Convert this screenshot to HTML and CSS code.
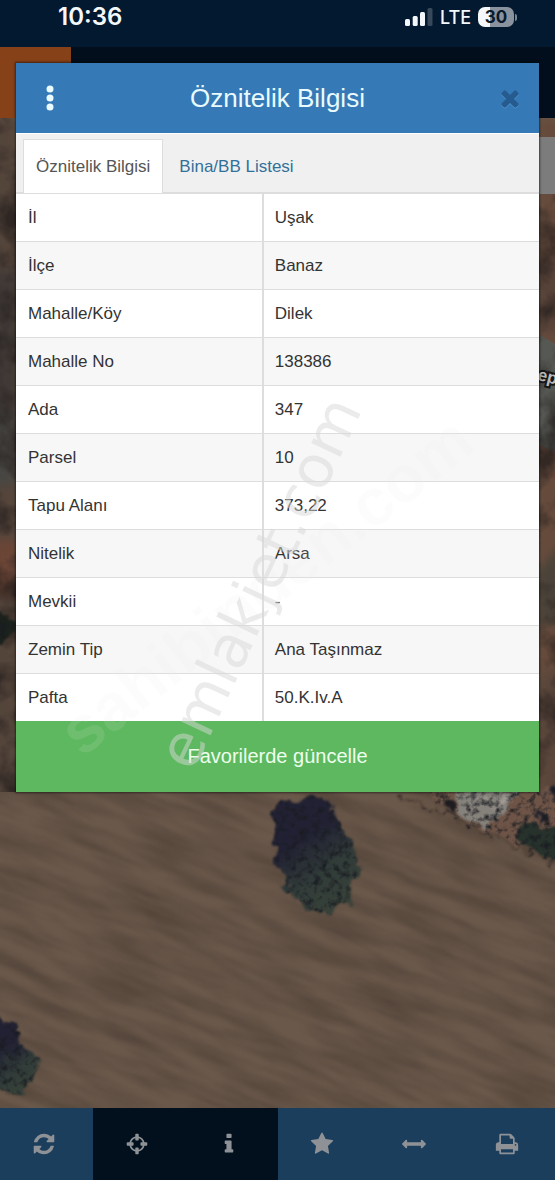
FILE: index.html
```html
<!DOCTYPE html>
<html lang="tr">
<head>
<meta charset="utf-8">
<meta name="viewport" content="width=device-width, initial-scale=1">
<title>Öznitelik Bilgisi</title>
<link rel="stylesheet" href="styles.css">
</head>
<body>
<div class="screen">
  <header class="status">
    <time class="clock">10:36</time>
    <div class="status-right">
      <svg class="signal" viewBox="0 0 28 18" aria-hidden="true">
        <g fill="#f4f8fb"><rect x="0" y="11" width="5" height="7" rx="1.5"/><rect x="7.700" y="8" width="5" height="10" rx="1.500"/><rect x="15" y="4" width="5" height="14" rx="1.5"/></g>
        <rect x="22.500" y="0" width="5" height="18" rx="1.5" fill="#37485a"/>
      </svg>
      <span class="network">LTE</span>
      <span class="battery">30</span>
    </div>
  </header>

  <main class="stage">
    <div class="backdrop" aria-hidden="true">
      <div class="appbar"><span class="appbar-logo"></span></div>
      <svg class="map" viewBox="0 118 555 990" preserveAspectRatio="xMidYMin slice">
        <defs>
          <filter id="furrows" x="0" y="0" width="100%" height="100%" color-interpolation-filters="sRGB">
            <feTurbulence type="fractalNoise" baseFrequency="0.012 0.07" numOctaves="4" seed="8"/>
            <feColorMatrix values="0 0 0 0 .25  0 0 0 0 .2  0 0 0 0 .17  .9 0 0 0 -.28"/>
            <feGaussianBlur stdDeviation="0.8"/>
          </filter>
          <filter id="patches" x="0" y="0" width="100%" height="100%" color-interpolation-filters="sRGB">
            <feTurbulence type="fractalNoise" baseFrequency="0.03" numOctaves="4" seed="3"/>
            <feColorMatrix values="0 0 0 0 .12  0 0 0 0 .1  0 0 0 0 .1  2.4 0 0 0 -.95"/>
          </filter>
          <filter id="soft" x="-100%" y="-10%" width="300%" height="120%" color-interpolation-filters="sRGB">
            <feGaussianBlur stdDeviation="5"/>
          </filter>
          <filter id="rough" x="-20%" y="-20%" width="140%" height="140%" color-interpolation-filters="sRGB">
            <feTurbulence type="fractalNoise" baseFrequency="0.09" numOctaves="2" seed="5" result="n"/>
            <feDisplacementMap in="SourceGraphic" in2="n" scale="18" xChannelSelector="R" yChannelSelector="G"/>
            <feGaussianBlur stdDeviation="1" result="shape"/>
            <feTurbulence type="fractalNoise" baseFrequency="0.14" numOctaves="3" seed="11"/>
            <feColorMatrix values="0 0 0 0 .1  0 0 0 0 .11  0 0 0 0 .13  2.4 0 0 0 -1.1"/>
            <feComposite in2="shape" operator="in" result="shade"/>
            <feMerge><feMergeNode in="shape"/><feMergeNode in="shade"/></feMerge>
          </filter>
          <linearGradient id="tree" x1="0.2" y1="0" x2="0.7" y2="1">
            <stop offset=".35" stop-color="#212133"/><stop offset=".65" stop-color="#303a38"/><stop offset="1" stop-color="#39433a"/>
          </linearGradient>
        </defs>
        <rect y="118" width="555" height="990" fill="#6a584a"/>
        <rect x="-300" y="300" width="1200" height="1200" filter="url(#furrows)" transform="rotate(22 277 800)"/>
        <g filter="url(#soft)">
          <rect x="-10" y="118" width="27" height="674" fill="#54453b"/>
          <rect x="-10" y="270" width="27" height="140" fill="#403936"/>
          <rect x="-10" y="410" width="27" height="75" fill="#484642"/>
          <rect x="-10" y="540" width="27" height="55" fill="#6b4536"/>
          <rect x="538" y="118" width="27" height="674" fill="#664b3c"/>
          <path d="M538 260h27v72h-27z" fill="#574238"/>
          <path d="M538 570l27-30v85h-27z" fill="#4b4339"/>
          <path d="M538 680l27-20v132h-27z" fill="#5a463b"/>
        </g>
        <path d="M538 334l17 10v108l-17-8z" fill="#565853"/>
        <rect y="118" width="17" height="674" filter="url(#patches)" opacity=".7"/>
        <rect x="538" y="194" width="17" height="598" filter="url(#patches)" opacity=".7"/>
        <g filter="url(#rough)">
          <path d="M420 790h150v74l-65-24-50-24z" fill="#6e5447"/>
          <path d="M454 790h62l-8 20-22 16-26-12z" fill="#85817b"/>
          <path d="M395 796l45 16 60 28 65 26" fill="none" stroke="#56453a" stroke-width="3"/>
          <path d="M470 795l36 14M492 792l24 12" stroke="#a39d95" stroke-width="2"/>
          <path d="M447 799l7 2 2 10-7 3-5-8z" fill="#201d20"/>
          <path d="M520 824l12-2 12 10 22-6v40l-32-14-14-8z" fill="#27322c"/>
          <path d="M534 814l8-2 5 6-7 6zM550 785l16-2v18l-18-4z" fill="#20202a"/>
          <path d="M-8 612q22-2 22 14t-22 22z" fill="#1b211c"/>
          <path d="M276 806l8-6 12 3 12-8 14 1 9 10 7 15 7 13 8 14 8 19-3 12-8 8-2 15-11 10-12 2-20-5-8-13-14-8 1-14-9-8 1-13-4-19 1-20z" fill="url(#tree)"/>
          <path d="M-10 1018l18 2 10 8 3 17 12 6 6 14-6 17-10 10-9 3-24-9z" fill="url(#tree)"/>
        </g>
        <rect x="538" y="137" width="17" height="57" fill="#7c7c7d"/>
        <text class="map-label" x="537" y="380" transform="rotate(14 538 379)">ep</text>
      </svg>
    </div>

    <section class="dialog" aria-labelledby="dialog-title">
      <div class="dialog-head">
        <button class="head-btn" type="button" aria-label="Menü">
          <svg width="8" height="26" viewBox="0 0 8 26" fill="#e9fbff"><circle cx="4" cy="4" r="3.500"/><circle cx="4" cy="13" r="3.500"/><circle cx="4" cy="22" r="3.500"/></svg>
        </button>
        <h1 class="dialog-title" id="dialog-title">Öznitelik Bilgisi</h1>
        <button class="head-btn close" type="button" aria-label="Kapat">
          <svg width="26" height="26" viewBox="0 0 1792 1792"><path d="M1490 1322q0 40-28 68l-136 136q-28 28-68 28t-68-28l-294-294-294 294q-28 28-68 28t-68-28l-136-136q-28-28-28-68t28-68l294-294-294-294q-28-28-28-68t28-68l136-136q28-28 68-28t68 28l294 294 294-294q28-28 68-28t68 28l136 136q28 28 28 68t-28 68l-294 294 294 294q28 28 28 68z"/></svg>
        </button>
      </div>
      <nav class="tabs">
        <a class="tab active" href="#bilgi" aria-current="page">Öznitelik Bilgisi</a>
        <a class="tab" href="#liste">Bina/BB Listesi</a>
      </nav>
      <table class="info">
        <tbody>
          <tr><th scope="row">İl</th><td>Uşak</td></tr>
          <tr><th scope="row">İlçe</th><td>Banaz</td></tr>
          <tr><th scope="row">Mahalle/Köy</th><td>Dilek</td></tr>
          <tr><th scope="row">Mahalle No</th><td>138386</td></tr>
          <tr><th scope="row">Ada</th><td>347</td></tr>
          <tr><th scope="row">Parsel</th><td>10</td></tr>
          <tr><th scope="row">Tapu Alanı</th><td>373,22</td></tr>
          <tr><th scope="row">Nitelik</th><td>Arsa</td></tr>
          <tr><th scope="row">Mevkii</th><td>-</td></tr>
          <tr><th scope="row">Zemin Tip</th><td>Ana Taşınmaz</td></tr>
          <tr><th scope="row">Pafta</th><td>50.K.Iv.A</td></tr>
        </tbody>
      </table>
      <button class="update" type="button">Favorilerde güncelle</button>
    </section>
  </main>

  <nav class="toolbar" aria-label="Harita araçları">
    <button class="tool" type="button" aria-label="Yenile"><svg viewBox="0 0 1792 1792"><path d="M1639 1056q0 5-1 7-64 268-268 434.500t-478 166.500q-146 0-282.500-55t-243.500-157l-129 129q-19 19-45 19t-45-19-19-45v-448q0-26 19-45t45-19h448q26 0 45 19t19 45-19 45l-137 137q71 66 161 102t187 36q134 0 250-65t186-179q11-17 53-117 8-23 30-23h192q13 0 22.500 9.500t9.500 22.500zm25-800v448q0 26-19 45t-45 19h-448q-26 0-45-19t-19-45 19-45l138-138q-148-137-349-137-134 0-250 65t-186 179q-11 17-53 117-8 23-30 23h-199q-13 0-22.500-9.500t-9.500-22.500v-7q65-268 270-434.500t480-166.500q146 0 284 55.500t245 156.500l130-129q19-19 45-19t45 19 19 45z"/></svg></button>
    <button class="tool dark" type="button" aria-label="Konum"><svg viewBox="0 0 1792 1792"><path d="M1325 1024h-109q-26 0-45-19t-19-45v-128q0-26 19-45t45-19h109q-32-108-112.500-188.500t-188.500-112.500v109q0 26-19 45t-45 19h-128q-26 0-45-19t-19-45v-109q-108 32-188.500 112.500t-112.500 188.500h109q26 0 45 19t19 45v128q0 26-19 45t-45 19h-109q32 108 112.500 188.500t188.500 112.500v-109q0-26 19-45t45-19h128q26 0 45 19t19 45v109q108-32 188.500-112.500t112.500-188.500zm339-192v128q0 26-19 45t-45 19h-143q-37 161-154.500 278.500t-278.500 154.500v143q0 26-19 45t-45 19h-128q-26 0-45-19t-19-45v-143q-161-37-278.500-154.500t-154.500-278.500h-143q-26 0-45-19t-19-45v-128q0-26 19-45t45-19h143q37-161 154.500-278.500t278.500-154.500v-143q0-26 19-45t45-19h128q26 0 45 19t19 45v143q161 37 278.500 154.500t154.500 278.500h143q26 0 45 19t19 45z"/></svg></button>
    <button class="tool dark" type="button" aria-label="Bilgi"><svg viewBox="0 0 1792 1792"><path d="M1216 1344v128q0 26-19 45t-45 19h-512q-26 0-45-19t-19-45v-128q0-26 19-45t45-19h64v-384h-64q-26 0-45-19t-19-45v-128q0-26 19-45t45-19h384q26 0 45 19t19 45v576h64q26 0 45 19t19 45zm-128-1152v192q0 26-19 45t-45 19h-256q-26 0-45-19t-19-45v-192q0-26 19-45t45-19h256q26 0 45 19t19 45z"/></svg></button>
    <button class="tool" type="button" aria-label="Favoriler"><svg viewBox="0 0 1792 1792"><path d="M1728 647q0 22-26 48l-363 354 86 500q1 7 1 20 0 21-10.500 35.500t-30.500 14.500q-19 0-40-12l-449-236-449 236q-22 12-40 12-21 0-31.500-14.500t-10.500-35.500q0-6 2-20l86-500-364-354q-25-27-25-48 0-37 56-46l502-73 225-455q19-41 49-41t49 41l225 455 502 73q56 9 56 46z"/></svg></button>
    <button class="tool" type="button" aria-label="Ölç"><svg viewBox="0 0 1792 1792"><path d="M1792 896q0 26-19 45l-256 256q-19 19-45 19t-45-19-19-45v-128h-1024v128q0 26-19 45t-45 19-45-19l-256-256q-19-19-19-45t19-45l256-256q19-19 45-19t45 19 19 45v128h1024v-128q0-26 19-45t45-19 45 19l256 256q19 19 19 45z"/></svg></button>
    <button class="tool" type="button" aria-label="Yazdır"><svg viewBox="0 0 1792 1792"><path d="M448 1536h896v-256h-896v256zm0-640h896v-384h-160q-40 0-68-28t-28-68v-160h-640v640zm1152 64q0-26-19-45t-45-19-45 19-19 45 19 45 45 19 45-19 19-45zm128 0v416q0 13-9.500 22.500t-22.500 9.500h-224v160q0 40-28 68t-68 28h-960q-40 0-68-28t-28-68v-160h-224q-13 0-22.500-9.500t-9.500-22.500v-416q0-79 56.500-135.500t135.500-56.500h64v-544q0-40 28-68t68-28h672q40 0 88 20t76 48l152 152q28 28 48 76t20 88v256h64q79 0 135.500 56.500t56.500 135.500z"/></svg></button>
  </nav>

  <svg class="watermarks" viewBox="0 0 555 1180" preserveAspectRatio="xMidYMin meet" aria-hidden="true">
    <text class="mark-faint" transform="translate(82 758) rotate(-38)">sahibinden.com</text>
    <text class="mark" transform="translate(193 773) rotate(-65)">emlakjet.com</text>
  </svg>
</div>
</body>
</html>
```

FILE: styles.css
```css
* {
  box-sizing: border-box;
}

body {
  margin: 0;
  background: #03101e;
  color: #333;
  font-family: "Liberation Sans", Arial, sans-serif;
  font-size: 17px;
}

button {
  border: 0;
  padding: 0;
  font: inherit;
  cursor: pointer;
}

.screen {
  position: relative;
  display: flex;
  flex-direction: column;
  min-height: 100vh;
}

/* Status bar */
.status {
  display: flex;
  justify-content: space-between;
  align-items: flex-start;
  height: 47px;
  padding: 4px 41px 0 58px;
  background: #03192f;
  color: #f4f8fb;
  font-family: Inter, sans-serif;
}

.clock {
  font-size: 24px;
  line-height: 26px;
  font-weight: 600;
}

.status-right {
  display: flex;
  align-items: center;
  gap: 7px;
  height: 26px;
}

.signal {
  width: 28px;
  height: 18px;
}

.network {
  font-size: 18px;
  font-weight: 500;
}

.battery {
  position: relative;
  width: 36px;
  border-radius: 7px;
  background: linear-gradient(90deg, #f4f8fb 32%, #8a939d 32%);
  color: #081a2c;
  font-size: 17px;
  line-height: 20px;
  font-weight: 700;
  text-align: center;
}

.battery::after {
  content: "";
  position: absolute;
  top: 7px;
  left: 37px;
  width: 2px;
  height: 7px;
  border-radius: 0 2px 2px 0;
  background: #7b858f;
}

/* Map with the dialog stacked on top */
.stage {
  flex: 1;
  display: grid;
}

.backdrop,
.dialog {
  grid-area: 1 / 1;
}

.backdrop {
  position: relative;
  display: flex;
  flex-direction: column;
  overflow: hidden;
}

.appbar {
  display: flex;
  height: 71px;
  background: #020e1b;
}

.appbar-logo {
  width: 71px;
  background: #864118;
}

.map {
  flex: 1;
  display: block;
  width: 100%;
  min-height: 0;
}

.map-label {
  fill: #b9b9b9;
  stroke: #161616;
  stroke-width: 4px;
  paint-order: stroke;
  font-size: 17px;
  font-weight: 700;
}

/* Dialog */
.dialog {
  position: relative;
  align-self: start;
  margin: 16px;
  background: #fff;
  box-shadow: 0 0 2px 1px rgba(0, 0, 0, 0.5);
}

.dialog-head {
  display: grid;
  grid-template-columns: 68px 1fr 68px;
  align-items: center;
  height: 70px;
  background: #357ab7;
}

.dialog-title {
  margin: 0;
  color: #e9fbff;
  font-size: 26px;
  font-weight: 400;
  text-align: center;
}

.head-btn {
  display: grid;
  place-items: center;
  height: 70px;
  background: none;
}

.close {
  padding-left: 10px;
}

.close svg {
  fill: #255b8f;
  filter: drop-shadow(0 1px 0 #4f90c8);
}

.tabs {
  display: flex;
  align-items: flex-end;
  height: 60px;
  padding: 0 7px;
  border-top: 1px solid #fff;
  background: #f0f0f0;
  box-shadow: inset 0 -1px #ddd;
}

.tab {
  height: 54px;
  padding: 0 16px;
  border-top: 1px solid transparent;
  color: #337099;
  line-height: 54px;
  text-decoration: none;
}

.tab.active {
  padding: 0 12px;
  border: 1px solid #ddd;
  border-bottom: 0;
  background: #fff;
  color: #555;
}

.info {
  width: 100%;
  border-collapse: separate;
  border-spacing: 0;
  table-layout: fixed;
}

.info th,
.info td {
  height: 48px;
  padding: 1px 12px 0;
  border-top: 1px solid #ddd;
  font-weight: 400;
  text-align: left;
}

.info th {
  width: 47%;
}

.info td {
  border-left: 2px solid #ddd;
  padding-left: 11px;
}

.info tr:nth-child(even) {
  background: #f7f7f7;
}

.update {
  display: block;
  width: 100%;
  height: 71px;
  background: #5db85f;
  color: #edffed;
  font-size: 20px;
}

/* Bottom toolbar */
.toolbar {
  display: grid;
  grid-template-columns: repeat(6, 1fr);
  height: 72px;
  background: #1c3e5d;
}

.tool {
  display: grid;
  place-items: center;
  padding-right: 4px;
  background: #1c3e5d;
}

.tool.dark {
  background: #02101d;
}

.tool svg {
  width: 24px;
  height: 24px;
  fill: #8e9296;
}

/* Watermarks lie over the whole screen */
.watermarks {
  position: absolute;
  top: 0;
  left: 0;
  width: 100%;
  pointer-events: none;
}

.mark {
  fill: #d8d8d8;
  opacity: 0.5;
  font-family: "DejaVu Sans", sans-serif;
  font-size: 59px;
}

.mark-faint {
  fill: #eee;
  opacity: 0.12;
  font-size: 66px;
  font-weight: 700;
}
```
